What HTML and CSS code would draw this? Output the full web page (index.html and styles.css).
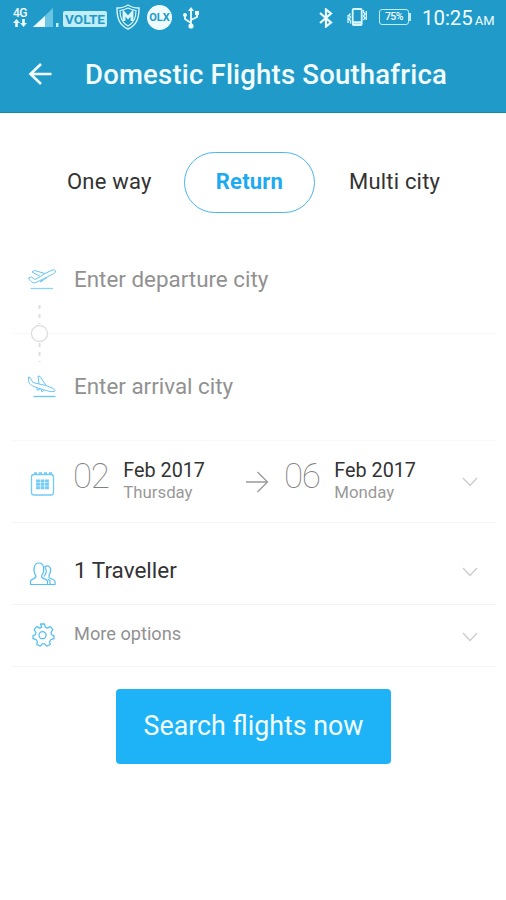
FILE: index.html
```html
<!DOCTYPE html>
<html lang="en">
<head>
    <meta charset="UTF-8">
    <meta name="viewport" content="width=device-width, initial-scale=1.0">
    <title>Domestic Flights Southafrica</title>
    <link rel="stylesheet" href="styles.css">
</head>
<body>
    <header>
        <div class="status-bar">
            <div class="network">
                <span>4G</span>
                <svg width="14" height="9" viewBox="0 0 14 9" fill="#e8fbff"><path d="M3.500 0L7 4H4.800V8H2.200V4H0zM10.500 8L7 4H9.200V0h2.600V4H14z"/></svg>
            </div>
            <svg class="signal" width="26" height="19" viewBox="0 0 26 19">
                <path d="M0 19L20 0V19z" fill="#6bc4e4"/>
                <path d="M0 19L12 8V19z" fill="#effcff"/>
                <path d="M23 15h2.500v4h-2.500z" fill="#c4effb"/>
            </svg>
            <span class="volte">VOLTE</span>
            <svg class="shield" width="24" height="26" viewBox="0 0 24 26" fill="none" stroke="#d9f6fd">
                <path d="M12 1C9 3 5 4 1 4C1 14 3 21 12 25C21 21 23 14 23 4C19 4 15 3 12 1z" stroke-width="1.400"/>
                <path d="M12 4C9 5.500 7 6 4 6.500C4 14 6 19 12 22C18 19 20 14 20 6.500C17 6 15 5.500 12 4z" stroke-width="1.200"/>
                <path d="M8 17V9L12 13.500L16 9V17" stroke-width="2.800"/>
            </svg>
            <span class="olx">OLX</span>
            <svg class="usb" width="16" height="22" viewBox="0 0 16 22" fill="none" stroke="#effcff" stroke-width="1.800">
                <path d="M8 3V19M8 16L2 12V8M8 13L14 10V6"/>
                <path d="M8 0L11 4H5zM12 4h4v4h-4z" fill="#effcff" stroke="none"/>
                <circle cx="2" cy="8" r="2" fill="#effcff" stroke="none"/>
                <circle cx="8" cy="19" r="2.600" fill="#effcff" stroke="none"/>
            </svg>
            <svg class="bluetooth" width="14" height="20" viewBox="0 0 14 20" fill="none" stroke="#effcff" stroke-width="2.200">
                <path d="M1 5L12 14.500L7 18.500V1.500L12 5.500L1 15"/>
            </svg>
            <svg class="vibrate" width="20" height="18" viewBox="0 0 20 18" fill="none" stroke="#d9f6fd">
                <rect x="5.700" y="1" width="9" height="16" rx="1" stroke-width="1.800"/>
                <path d="M6 14.500h8" stroke-width="2.500"/>
                <path d="M3.500 5.500L2 7L3.500 9L2 11L3.500 13V15.500M1 7v8M16.500 2v2L18 6L16.500 8L18 10L16.500 12M19.300 3v9" stroke-width="1.300"/>
            </svg>
            <div class="battery"><span>75%</span></div>
            <div class="clock"><span>10:25</span><small>AM</small></div>
        </div>
        <div class="app-bar">
            <svg width="24" height="24" viewBox="0 0 24 24" fill="none" stroke="#f2fdff" stroke-width="2.600"><path d="M13 1L2.500 11L13 21M2 11H23.500"/></svg>
            <h1>Domestic Flights Southafrica</h1>
        </div>
    </header>

    <main>
        <nav class="tabs">
            <a class="one-way">One way</a>
            <a class="active">Return</a>
            <a class="multi">Multi city</a>
        </nav>

        <section class="form">
            <!-- Departure and arrival -->
            <div class="row departure">
                <svg class="icon" width="30" height="24" viewBox="0 0 30 24" fill="none" stroke="#68c5f5" stroke-width="1">
                    <path d="M1.500 10L4.500 9L8 11.500L13.500 8.500L5 4L7.500 2.500L18 5.500L25 2.200C27 1.500 29 2 28.500 4C28 5 26 6 24 7L9 14.500C6 15.500 4 14 1.500 10zM13.500 8.500L18 5.500M15 11.500L13.500 14L20 9.500"/>
                    <path d="M3.500 20.500H26" stroke="#8ed3f7" stroke-width="1.300"/>
                </svg>
                <span class="placeholder">Enter departure city</span>
                <svg class="link" width="18" height="60" viewBox="0 0 18 60" fill="none" stroke="#dedede">
                    <path d="M8.500 2V21M8.500 40V59" stroke-width="2" stroke-dasharray="4 5"/>
                    <circle cx="8.500" cy="30.500" r="8" fill="#fff" stroke-width="1.300"/>
                </svg>
            </div>
            <div class="row arrival">
                <svg class="icon" width="30" height="24" viewBox="0 0 30 24" fill="none" stroke="#68c5f5" stroke-width="1">
                    <path d="M1.500 2L3 2.500L6 7.500L12 9L11 1L13 1.500L19 10.500L25 13C28 14 29 16 27 16.500C24 17 20 15.500 17 15L7 11.500C3 10 1 8 1.500 2zM12 9L19 10.500M10 12.500V15H12L13 13.500M14 14L15 17L17 15"/>
                    <path d="M6.500 21.500H28.500" stroke-width="1.300"/>
                </svg>
                <span class="placeholder">Enter arrival city</span>
            </div>

            <!-- Travel dates -->
            <div class="row dates">
                <svg class="icon" width="30" height="26" viewBox="0 0 30 26" fill="none" stroke="#72caf7">
                    <rect x="3.500" y="3.500" width="22" height="20.500" rx="2.500" stroke-width="1.300"/>
                    <path d="M6 2.500h3M11 2.500h3M16 2.500h3M21 2.500h3" stroke-width="2.500"/>
                    <path d="M10 8.500v10M14.500 8.500v10M19 8.500v10" stroke-width="3.800" stroke-dasharray="2.900 .5"/>
                </svg>
                <div class="date">
                    <span class="day">02</span>
                    <div class="date-info"><b>Feb 2017</b><span>Thursday</span></div>
                </div>
                <svg class="to" width="24" height="22" viewBox="0 0 24 22" fill="none" stroke="#999" stroke-width="1.300"><path d="M1 11H22M12.500 1L22.500 11L12.500 21"/></svg>
                <div class="date">
                    <span class="day">06</span>
                    <div class="date-info"><b>Feb 2017</b><span>Monday</span></div>
                </div>
                <svg class="chevron" width="16" height="10" viewBox="0 0 16 10"><path d="M1 1L8 8.500L15 1"/></svg>
            </div>

            <div class="row travellers">
                <svg class="icon" width="30" height="26" viewBox="0 0 30 26" fill="none" stroke="#58bff5" stroke-width="1.200">
                    <path d="M2.500 23.500V20C3 17.500 8.500 18 8 15C4.500 10 5.500 2 11 2C16.500 2 17 10 13.500 15C13 18 19 17.500 19.500 20V23.500z"/>
                    <path d="M16.500 6C20 3.500 23.500 6 22.500 10.500C22 13 20.500 14 21 16C21 18 27 18 27 20.500V23.500H19.500M17 6C19 9 18 13 16 15.500M20 18L22 20V23.500"/>
                </svg>
                <span class="traveller-text">1 Traveller</span>
                <svg class="chevron" width="16" height="10" viewBox="0 0 16 10"><path d="M1 1L8 8.500L15 1"/></svg>
            </div>

            <div class="row options">
                <svg class="icon" width="30" height="26" viewBox="0 0 30 26" fill="none" stroke="#58bff5" stroke-width="1.300" stroke-linejoin="round">
                    <path d="M12.500 2h4l.8 3.200l2 1l3-1.500l2.500 3l-1.800 2.800l.8 2.200l2.200 1.200v2.800l-3.200 1l-1.200 2.200l.6 2.600l-3.300 1.600l-2.400-2.300h-2l-2.400 2.300l-3.300-1.600l.6-2.600l-1.200-2.200l-3.200-1v-2.800l2.200-1.200l.8-2.200l-1.800-2.800l2.500-3l3 1.500l2-1z"/>
                    <circle cx="14.500" cy="13.200" r="3.500"/>
                </svg>
                <span class="options-text">More options</span>
                <svg class="chevron" width="16" height="10" viewBox="0 0 16 10"><path d="M1 1L8 8.500L15 1"/></svg>
            </div>
        </section>

        <button type="submit">Search flights now</button>
    </main>
</body>
</html>
```

FILE: styles.css
```css
body {
    font-family: Roboto, "Liberation Sans", sans-serif;
    margin: 0;
    background-color: #fff;
    color: #333;
}

svg {
    display: block;
    flex-shrink: 0;
}

header {
    height: 113px;
    box-sizing: border-box;
    background-color: #209bc9;
    border-bottom: 1px solid #1787b2;
    color: #f2fdff;
}

/* Phone status bar */
.status-bar {
    display: flex;
    align-items: flex-start;
    height: 37px;
    padding-left: 13px;
    white-space: nowrap;
}

.network {
    width: 14px;
    padding-top: 8px;
    font-size: 12px;
    font-weight: 500;
    line-height: 11px;
    letter-spacing: -0.5px;
}

.signal {
    margin: 8px 0 0 6px;
}

.volte {
    width: 44px;
    height: 16px;
    margin: 11px 0 0 4px;
    border-radius: 2px;
    background-color: #c1edf9;
    color: #209bc9;
    font-size: 13.5px;
    font-weight: 700;
    line-height: 17px;
    text-align: center;
}

.shield {
    margin: 4px 0 0 9px;
}

.olx {
    width: 25px;
    height: 25px;
    margin: 5px 0 0 7px;
    border-radius: 50%;
    background-color: #effcff;
    color: #209bc9;
    font-size: 11px;
    font-weight: 700;
    line-height: 25px;
    text-align: center;
}

.usb {
    margin: 7px 0 0 11px;
}

.bluetooth {
    margin: 8px 0 0 120px;
}

.vibrate {
    margin: 8px 0 0 14px;
}

.battery {
    position: relative;
    width: 30px;
    height: 16px;
    margin: 9px 0 0 12px;
    box-sizing: border-box;
    border: 1.5px solid #c1edf9;
    border-radius: 3px;
    font-size: 10.5px;
    font-weight: 500;
    line-height: 14px;
    letter-spacing: -0.5px;
    text-align: center;
}

.battery::after {
    content: "";
    position: absolute;
    right: -3px;
    top: 3px;
    width: 2px;
    height: 8px;
    background-color: #c1edf9;
}

.clock {
    display: flex;
    align-items: baseline;
    margin: 6px 0 0 13px;
    font-size: 20.4px;
    line-height: 24px;
}

.clock small {
    margin-left: 2px;
    font-size: 13px;
}

.app-bar {
    display: flex;
    align-items: center;
    height: 75px;
    padding-left: 28px;
}

h1 {
    margin: 0 0 0 33px;
    font-size: 27.5px;
    font-weight: 500;
    line-height: 32px;
    letter-spacing: 0.2px;
    white-space: nowrap;
}

/* Trip type */
.tabs {
    display: flex;
    align-items: center;
    height: 61px;
    padding: 39px 0 0 67px;
    font-size: 22px;
    line-height: 26px;
    letter-spacing: 0.2px;
    white-space: nowrap;
}

.one-way {
    width: 117px;
    padding-bottom: 2px;
}

.tabs .active {
    width: 131px;
    height: 61px;
    box-sizing: border-box;
    border: 1.5px solid #4cb5ea;
    border-radius: 31px;
    color: #1eaaf1;
    font-weight: 700;
    line-height: 57px;
    text-align: center;
}

.multi {
    margin-left: 34px;
    padding-bottom: 2px;
}

.form {
    margin: 13px 10px 0 12px;
}

.row {
    display: flex;
    align-items: flex-start;
    box-sizing: border-box;
    border-bottom: 1px solid #f4f4f4;
    white-space: nowrap;
}

.icon {
    width: 30px;
    margin: 0 16px;
}

.departure {
    position: relative;
    height: 108px;
    padding-top: 40px;
    border-color: #f8f8f8;
}

.departure .icon,
.arrival .icon {
    margin: 2px 17px 0 15px;
}

.placeholder {
    color: #919191;
    font-size: 22.4px;
    line-height: 26px;
}

.link {
    position: absolute;
    left: 19px;
    top: 77px;
}

.arrival {
    height: 107px;
    padding-top: 39px;
    border-color: #f8f8f8;
}

.dates {
    height: 82px;
    padding-top: 18px;
}

.dates .icon {
    margin-top: 12px;
}

.date {
    display: flex;
    width: 131px;
}

.day {
    width: 37px;
    color: #808080;
    font-size: 35px;
    font-weight: 100;
    line-height: 36px;
    letter-spacing: -1.5px;
    text-indent: -1px;
}

.date-info {
    display: flex;
    flex-direction: column;
    margin-left: 14px;
}

.date-info b {
    font-size: 19.8px;
    font-weight: 400;
    line-height: 23px;
}

.date-info span {
    color: #999;
    font-size: 16.8px;
    line-height: 20px;
}

.to {
    margin: 12px 16px 0 40px;
}

.chevron {
    margin: 0 18px 0 auto;
    fill: none;
    stroke: #ccc;
    stroke-width: 1.3;
}

.dates .chevron {
    margin-top: 18px;
}

.travellers {
    height: 82px;
    padding-top: 34px;
}

.travellers .icon {
    margin-top: 4px;
}

.traveller-text {
    font-size: 22.5px;
    line-height: 26px;
}

.travellers .chevron {
    margin-top: 10px;
}

.options {
    height: 62px;
    padding-top: 17px;
}

.options-text {
    color: #919191;
    font-size: 18.2px;
    line-height: 24px;
}

.options .chevron {
    margin-top: 10px;
}

button {
    display: block;
    width: 275px;
    height: 75px;
    margin: 22px 0 0 116px;
    padding: 0 0 1px;
    border: none;
    border-radius: 4px;
    background-color: #1db3f6;
    color: #f2fdff;
    font-family: inherit;
    font-size: 26.8px;
    cursor: pointer;
}
```
